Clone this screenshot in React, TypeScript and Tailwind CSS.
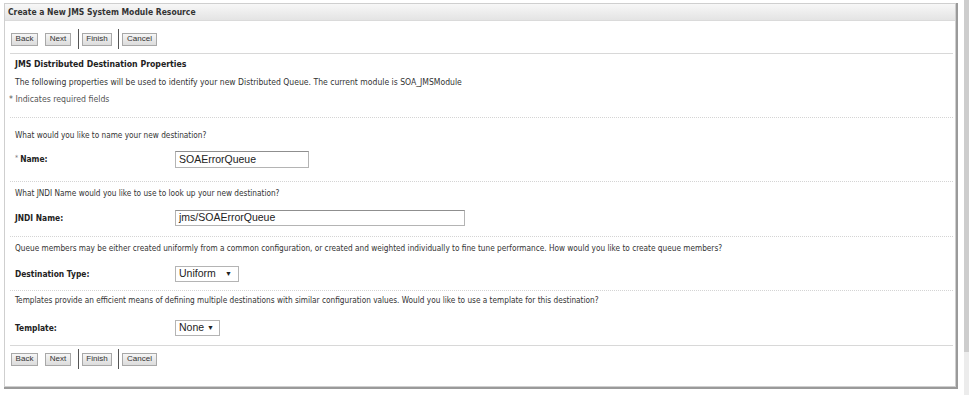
import React from 'react';

const small = "font-['DejaVu_Sans_Condensed','DejaVu_Sans',sans-serif]";

function Buttons({ nextActive = false }: { nextActive?: boolean }) {
  const btn =
    "h-[13px] px-[3px] flex items-center border border-[#a8a8a8] bg-gradient-to-b from-[#f6f6f6] to-[#dcdcdc] text-[8px] text-[#333] font-['Liberation_Sans',Arial,sans-serif] leading-none";
  return (
    <div className="flex items-center h-[22px]">
      <button className={`${btn} w-[27px] justify-center`}>Back</button>
      <button
        className={`${btn} w-[26px] justify-center ml-[7px] ${
          nextActive ? 'from-[#e6ecf7] to-[#c9d5ea] border-[#7d8fb3]' : ''
        }`}
      >
        Next
      </button>
      <div className="w-px h-[20px] bg-[#555] ml-[7px]" />
      <button className={`${btn} w-[30px] justify-center ml-[3px]`}>Finish</button>
      <div className="w-px h-[20px] bg-[#555] ml-[6px]" />
      <button className={`${btn} w-[35px] justify-center ml-[3px]`}>Cancel</button>
    </div>
  );
}

function Section({
  question,
  label,
  required = false,
  children,
  spacing,
}: {
  question: string;
  label: string;
  required?: boolean;
  children: React.ReactNode;
  spacing: { pt: string; row: string };
}) {
  return (
    <div>
      <div className="ml-[5px] mr-[2px] border-t border-dotted border-[#d4d4d4]" />
      <div className={`${spacing.pt} pl-[10px] leading-[10px] text-[8.2px] text-[#333]`}>{question}</div>
      <div className={`flex items-center pl-[10px] ${spacing.row}`}>
        <div className="w-[160px] text-[8.4px] font-bold text-[#222] flex items-center">
          {required && <span className="text-[7px] text-[#777] font-normal mr-[2px] -mt-[3px]">*</span>}
          {label}
        </div>
        {children}
      </div>
    </div>
  );
}

export default function App() {
  const input =
    "h-full border border-[#b4b4b4] border-t-[#8f8f8f] bg-white flex items-center px-[3px] text-[10.5px] text-[#222] font-['Liberation_Sans',Arial,sans-serif]";
  return (
    <div className={`w-[969px] h-[395px] bg-white flex ${small}`}>
      <div className="flex-1 pl-[4px] pt-[3px]">
        <div className="w-[952px] h-[384px] border border-[#cfcfcf] shadow-[1px_1px_0_1px_#9a9a9a] flex flex-col">
          {/* title bar */}
          <div className="h-[17px] flex items-center pl-[3px] bg-gradient-to-b from-[#f7f7f7] to-[#e4e4e4] border-b border-[#dadada] text-[8.5px] font-bold text-[#333]">
            Create a New JMS System Module Resource
          </div>

          <div className="pl-[6px] pt-[7px] pb-[3px]">
            <Buttons />
          </div>
          <div className="ml-[5px] mr-[2px] border-t border-[#d8d8d8]" />

          <div className="pl-[10px] pt-[5px] leading-[10px] text-[8.7px] font-bold text-[#222]">
            JMS Distributed Destination Properties
          </div>
          <div className="pl-[10px] pt-[8px] leading-[10px] text-[8.55px] text-[#333]">
            The following properties will be used to identify your new Distributed Queue. The current module is SOA_JMSModule
          </div>
          <div className="pl-[4px] pt-[7px] pb-[13px] leading-[10px] text-[8.7px] text-[#555]">
            * Indicates required fields
          </div>

          <Section
            spacing={{ pt: 'pt-[12px]', row: 'mt-[11px] h-[17px] mb-[13px]' }}
            question="What would you like to name your new destination?"
            label="Name:"
            required
          >
            <div className={`${input} w-[134px]`}>SOAErrorQueue</div>
          </Section>

          <Section
            spacing={{ pt: 'pt-[6px]', row: 'mt-[12px] h-[16px] mb-[10px]' }}
            question="What JNDI Name would you like to use to look up your new destination?"
            label="JNDI Name:"
          >
            <div className={`${input} w-[290px]`}>jms/SOAErrorQueue</div>
          </Section>

          <Section
            spacing={{ pt: 'pt-[6px]', row: 'mt-[13px] h-[16px] mb-[8px]' }}
            question="Queue members may be either created uniformly from a common configuration, or created and weighted individually to fine tune performance. How would you like to create queue members?"
            label="Destination Type:"
          >
            <div className={`${input} w-[64px] justify-between border-t-[#b4b4b4]`}>
              <span>Uniform</span>
              <span className="text-[7px] mr-[3px]">▼</span>
            </div>
          </Section>

          <Section
            spacing={{ pt: 'pt-[4px]', row: 'mt-[15px] h-[16px] mb-[9px]' }}
            question="Templates provide an efficient means of defining multiple destinations with similar configuration values. Would you like to use a template for this destination?"
            label="Template:"
          >
            <div className={`${input} w-[45px] justify-between border-t-[#b4b4b4]`}>
              <span>None</span>
              <span className="text-[7px] mr-[2px]">▼</span>
            </div>
          </Section>

          <div className="ml-[5px] mr-[2px] border-t border-[#d8d8d8]" />
          <div className="pl-[6px] pt-[2px]">
            <Buttons nextActive />
          </div>
        </div>
      </div>
      <div className="w-[5px] flex flex-col">
        <div className="h-[352px] bg-[#cdcdcd]" />
        <div className="flex-1 bg-[#ececec]" />
      </div>
    </div>
  );
}
